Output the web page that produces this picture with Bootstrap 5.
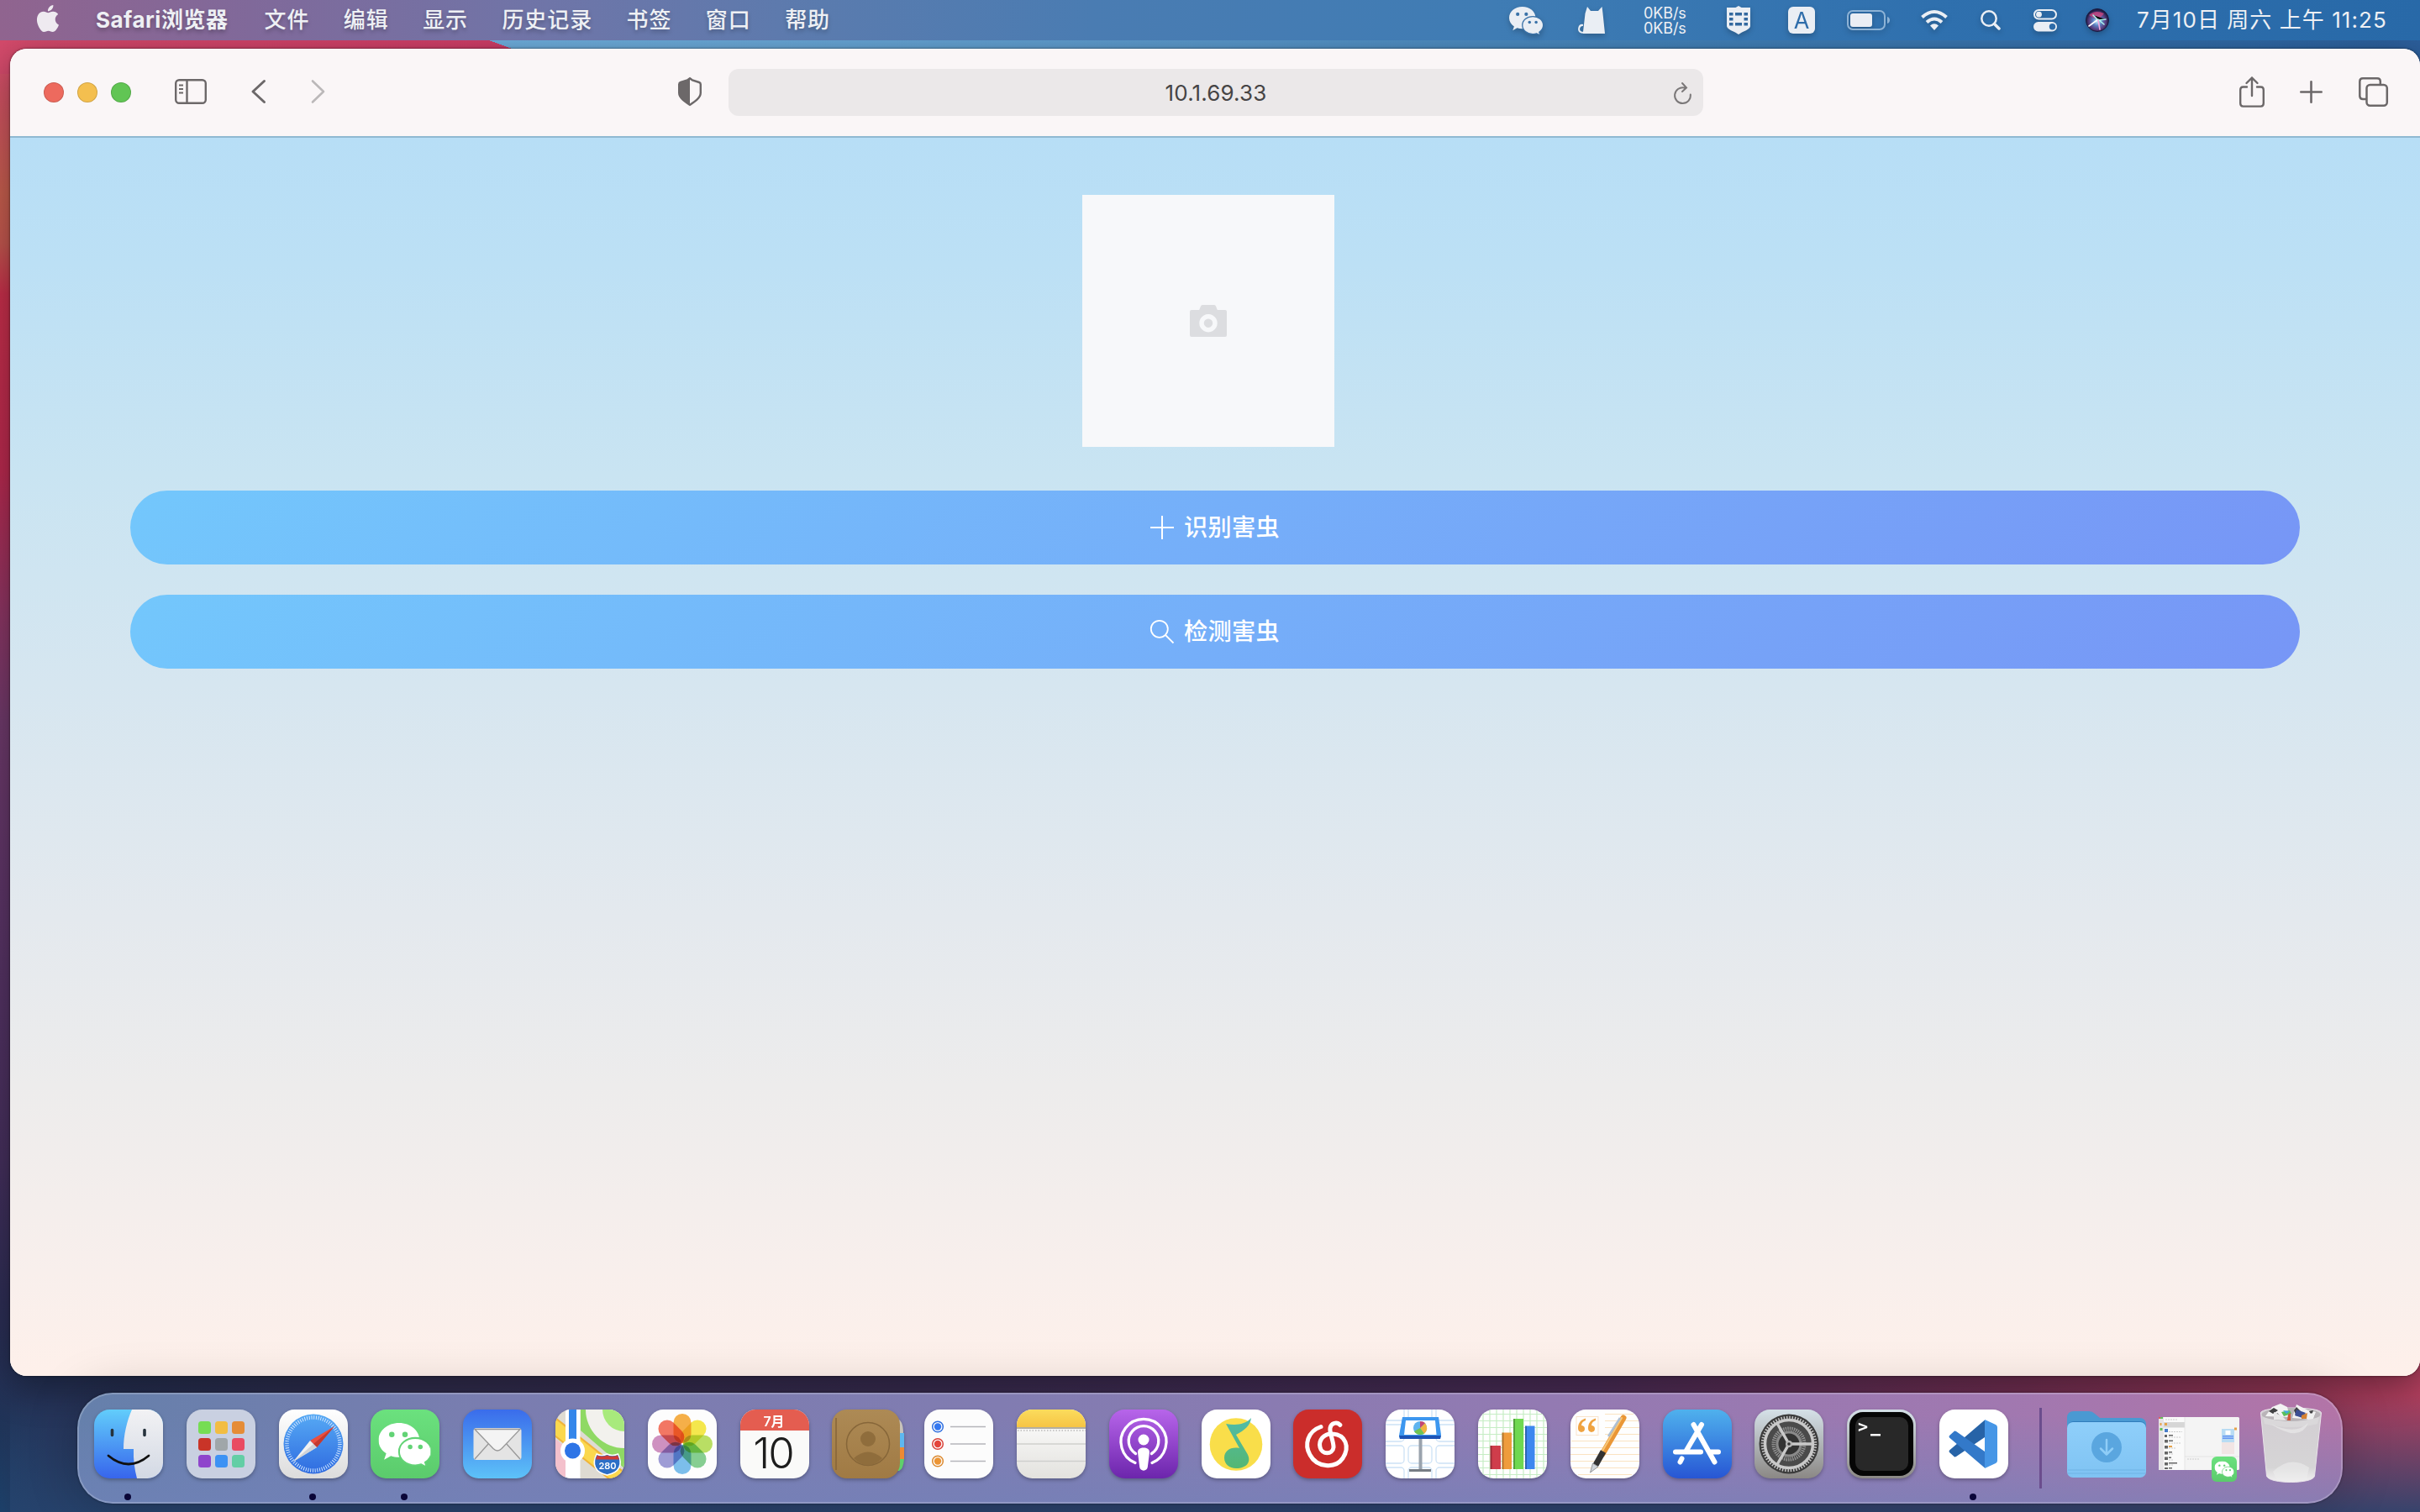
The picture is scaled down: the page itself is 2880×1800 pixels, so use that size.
<!DOCTYPE html>
<html lang="zh-CN">
<head>
<meta charset="utf-8">
<title>10.1.69.33</title>
<link href="https://cdn.jsdelivr.net/npm/bootstrap@5.3.0/dist/css/bootstrap.min.css" rel="stylesheet">
<script src="https://cdn.jsdelivr.net/npm/bootstrap@5.3.0/dist/js/bootstrap.bundle.min.js"></script>
<style>
html,body{width:2880px;height:1800px;overflow:hidden}
body{font-family:Inter,"Noto Sans CJK SC",sans-serif;font-size:26px;line-height:1.2;
 background:
 linear-gradient(180deg,rgba(42,70,112,0),rgba(38,68,110,.88)) 12px 1660px/2868px 140px no-repeat,
 linear-gradient(90deg,rgba(31,53,88,0) 0,#263358 60px,#353155 500px,#3e3058 1100px,#52315f 1900px,#7c335a 2400px,#a33c5c 2760px,#b23f5e 2880px) 0 1600px/2880px 200px no-repeat,
 linear-gradient(to top right,#d03e68 49.5%,#6fafde 50.5%) 582px 48px/30px 11px no-repeat,
 linear-gradient(90deg,#d54b6c 0,#d03e68 582px,#6fafde 582px,#6aa9d9 930px,#5c9bce 1400px,#4383ba 2000px,#2f68a5 2700px,#2c5f9c 2880px) 0 48px/2880px 40px no-repeat,
 linear-gradient(180deg,#d84d6f 0,#d84d6f 60px,#c9604f 230px,#c55850 290px,#c9304c 350px,#bb2a50 560px,#8d3766 735px,#703b6d 860px,#5c3568 1090px,#46305e 1380px,#2e2e56 1550px,#1f3458 1700px,#1c4069 1800px)}
svg{display:block;flex:none;overflow:visible}
.menubar{height:48px;flex:none;position:relative;z-index:2;color:#eef0f4;background:linear-gradient(90deg,#90648f 0,#80699a 300px,#6f75a8 650px,#5a7bae 980px,#4a7cb2 1300px,#3f7cb4 1780px,#2f70ae 2300px,#2869a8 2880px);padding:0 38px 0 41px}
.apple-mark{margin-top:-4px}
.menu-words{margin-left:41px;gap:40.5px;letter-spacing:.9px;font-weight:500;text-shadow:0 3px 5px rgba(0,0,0,.25)}
.menu-words .app-name{width:160px;font-weight:700;letter-spacing:.5px}
.menu-status svg,.menu-status .ime-key{filter:drop-shadow(0 3px 3px rgba(0,0,0,.22))}
.net-rate{font-size:18px;line-height:18px;width:52px;margin:2px 47px 0 46px;letter-spacing:-.1px}
.ime-key{width:32px;height:32px;border-radius:6px;background:#eaeef4;color:#2f6daa;font-size:27px;line-height:33px;margin-left:45px}
.clock{width:299px;margin-left:33px;letter-spacing:1.05px}
.gap-33{margin-left:33px}.gap-34{margin-left:34px}.gap-37{margin-left:37px}.gap-38{margin-left:38px}.gap-39{margin-left:39px}.gap-42{margin-left:42px}.gap-43{margin-left:43px}.gap-52{margin-left:52px}.gap-53{margin-left:53px}.gap-420{margin-left:420px}
.bubble-bar{--b:#eaeef4;color:#3a72a8}
.bubble-app{--b:#fff;color:#62d375}
.blend{mix-blend-mode:multiply}
.browser{height:1580px;border-radius:20px;overflow:hidden;background:#faf6f7}
.browser-shade{margin:10px 0 0 12px;box-shadow:0 0 3px rgba(0,0,0,.6),0 12px 46px rgba(0,0,0,.42);border-radius:20px;flex:none}
.toolbar{height:106px;background:#faf6f7;border-bottom:2px solid #8fb9d2;padding:0 38px 2px 40px;color:#6c6869;flex:none}
.lights{gap:16px;padding-top:2px}
.light{width:24px;height:24px;border-radius:50%;border:1px solid rgba(0,0,0,.14)}
.light-r{background:#ed6a5e}.light-y{background:#f4bf4f}.light-g{background:#61c554}
.address{width:1160px;height:56px;margin:2px 0 0 32px;border-radius:12px;background:#ebe8e9;color:#464445;padding:2px 14px 0 35px;font-size:26px;letter-spacing:.15px}
.page-body{background:linear-gradient(180deg,#b7def6 0,#bce0f5 150px,#c9e4f2 400px,#d6e6f0 650px,#e4e9ee 930px,#edecec 1130px,#f8efec 1350px,#fef0ea 1475px);padding:68px 143px 0}
.photo-box{width:300px;height:300px;background:#f7f8fa;margin:0 16px 52px 0}
.pill{height:88px;border:0;border-radius:44px;width:2582px;background:linear-gradient(135deg,#73c7fc 0,#7796f6 100%);color:#fff;font-size:28.2px;letter-spacing:.3px;font-weight:500;gap:12px;margin-bottom:36px}
.pill:hover{color:#fff}
.dock{position:relative;height:132px;width:2696px;margin:20px 0 0 92px;flex:none;border-radius:42px;padding:0 25px 0 20px;
 background:linear-gradient(180deg,rgba(112,130,186,0) 20%,rgba(112,130,186,.62)),linear-gradient(90deg,#6580ab 0,#7a7db0 500px,#817cb1 1100px,#937ab2 1750px,#a178b0 2300px,#b374a7 2696px);
 box-shadow:inset 0 0 0 2px rgba(255,255,255,.2),0 0 3px rgba(0,0,0,.4),0 0 60px rgba(0,0,0,.22)}
.dock-apps{padding-top:20px}
.dock-app{width:109.8px;flex:none}
.dock-app svg{filter:drop-shadow(0 2px 2px rgba(0,0,0,.28))}
.running{width:8px;height:8px;border-radius:50%;background:#0a0638;margin:18px 0 0 36px}
.rule-v{width:3px;height:96px;background:#6b4d8d;margin:18px 0 0 9px}
.folder{margin:22px 0 0 30px}
.minimized{margin:29px 0 0 15px}
.trash{margin:12px 0 0 25px}
</style>
</head>
<body class="d-flex flex-column">
<svg width="0" height="0" class="position-absolute" aria-hidden="true">
 <defs>
  <symbol id="wx" viewBox="0 0 61 50">
   <path fill="var(--b)" d="M24 0C10.500 0 0 9 0 20c0 6.500 3.500 12 9 15.500L6.500 43l8-4.500c3 1 6 1.500 9.500 1.500 13.500 0 24-9 24-20S37.500 0 24 0z"/>
   <path fill="var(--b)" stroke="currentColor" stroke-width="2" d="M43 17.500c-10.500 0-19 7-19 16s8.500 16 19 16c2.600 0 5-.4 7-1.100l6.500 3.600-1.900-6c4.500-3 7.400-7.500 7.400-12.500 0-9-8.500-16-19-16z"/>
   <g fill="currentColor"><circle cx="15.500" cy="13.500" r="3.200"/><circle cx="31" cy="13.500" r="3.200"/><circle cx="37" cy="28" r="2.700"/><circle cx="49" cy="28" r="2.700"/></g>
  </symbol>
  <linearGradient id="g1" x2="0" y2="1"><stop stop-color="#62cdfb"/><stop offset="1" stop-color="#3765ec"/></linearGradient>
  <linearGradient id="g2" x2="0" y2="1"><stop stop-color="#f2f2f4"/><stop offset="1" stop-color="#d3d9e4"/></linearGradient>
  <linearGradient id="g3" x2="0" y2="1"><stop stop-color="#fff"/><stop offset="1" stop-color="#dcdcdc"/></linearGradient>
  <linearGradient id="g4" x2="0" y2="1"><stop stop-color="#56a9f4"/><stop offset="1" stop-color="#2f6be0"/></linearGradient>
  <linearGradient id="g5" x2="0" y2="1"><stop stop-color="#6be17e"/><stop offset="1" stop-color="#5bcb6c"/></linearGradient>
  <linearGradient id="g6" x2="0" y2="1"><stop stop-color="#3a6ceb"/><stop offset="1" stop-color="#5dc2f8"/></linearGradient>
  <linearGradient id="g7" x2="0" y2="1"><stop stop-color="#b765ea"/><stop offset="1" stop-color="#6c25ac"/></linearGradient>
  <linearGradient id="g8" x2="0" y2="1"><stop stop-color="#4fb1ed"/><stop offset="1" stop-color="#2756d4"/></linearGradient>
  <linearGradient id="g9" x2="0" y2="1"><stop stop-color="#d5e1e8"/><stop offset="1" stop-color="#8b8885"/></linearGradient>
  <linearGradient id="g10" x2="0" y2="1"><stop stop-color="#fbdc5d"/><stop offset="1" stop-color="#f6c444"/></linearGradient>
  <linearGradient id="g11" x2="0" y2="1"><stop stop-color="#fff"/><stop offset="1" stop-color="#e3e2de"/></linearGradient>
  <linearGradient id="g12" x2="0" y2="1"><stop stop-color="#ad8a55"/><stop offset="1" stop-color="#a07a44"/></linearGradient>
  <linearGradient id="g13" x2="0" y2="1"><stop stop-color="#8fcffa"/><stop offset="1" stop-color="#7fc3f3"/></linearGradient>
  <linearGradient id="g14" x2="0" y2="1"><stop stop-color="#4fbba9"/><stop offset="1" stop-color="#55b773"/></linearGradient>
  <linearGradient id="g15" x2="0" y2="1"><stop stop-color="#d2cdd2"/><stop offset=".8" stop-color="#d6d5d6"/><stop offset="1" stop-color="#f2f1f2"/></linearGradient>
  <radialGradient id="siri" cx=".5" cy=".55" r=".5"><stop stop-color="#c6f3ff"/><stop offset=".4" stop-color="#5b7fc0"/><stop offset=".75" stop-color="#593b7c"/><stop offset="1" stop-color="#1c1c44"/></radialGradient>
  <clipPath id="sq"><rect width="82" height="82" rx="18.500"/></clipPath>
 </defs>
</svg>

<nav class="menubar d-flex align-items-center justify-content-between text-nowrap">
 <div class="d-flex align-items-center">
  <svg class="apple-mark" width="32" height="32" viewBox="0 0 24 24"><path fill="#eeeaf0" d="M12.152 6.896c-.948 0-2.415-1.078-3.960-1.040-2.040.027-3.910 1.183-4.961 3.014-2.117 3.675-.546 9.103 1.519 12.090 1.013 1.454 2.208 3.090 3.792 3.039 1.520-.065 2.090-.987 3.935-.987 1.831 0 2.350.987 3.960.948 1.637-.026 2.676-1.480 3.676-2.948 1.156-1.688 1.636-3.325 1.662-3.415-.039-.013-3.182-1.221-3.220-4.857-.026-3.040 2.480-4.494 2.597-4.559-1.429-2.090-3.623-2.324-4.390-2.376-2-.156-3.675 1.090-4.610 1.090zM15.530 3.830c.843-1.012 1.400-2.427 1.245-3.830-1.207.052-2.662.805-3.532 1.818-.78.896-1.454 2.338-1.273 3.714 1.338.104 2.715-.688 3.559-1.701"/></svg>
  <div class="menu-words d-flex">
   <span class="app-name">Safari浏览器</span><span>文件</span><span>编辑</span><span>显示</span><span>历史记录</span><span>书签</span><span>窗口</span><span>帮助</span>
  </div>
 </div>
 <div class="menu-status d-flex align-items-center">
  <svg class="bubble-bar" width="40" height="33"><use href="#wx"/></svg>
  <svg class="gap-42" width="32" height="32" viewBox="0 0 32 32"><path fill="#eaeef4" d="M11 0l4 5h9l4.500-5 1 8L32 32H6V30L8.500 8z"/><path fill="none" stroke="#eaeef4" stroke-width="2" d="M6 22c-5-1-7 7-2 8.500l4 .5"/></svg>
  <div class="net-rate">0KB/s<br>0KB/s</div>
  <svg width="28" height="34" viewBox="0 0 28 34"><path fill="#eaeef4" d="M14 0l3.500 2H28v22c0 3-6 6-10 7.500L14 34l-4-2.500C6 30 0 27 0 24V2h10.500z"/><path fill="#33699f" d="M3 8h4.500v3.500H3zM10 8h8v3.500h-8zM20.500 8H25v3.500h-4.500zM3 14h4.500v3.500H3zM20.500 14H25v3.500h-4.500zM3 20h4.500v3.500H3zM10 20h8v3.500h-8zM20.500 20H25v3.500h-4.500z"/></svg>
  <div class="ime-key text-center">A</div>
  <svg class="gap-38" width="51" height="24" viewBox="0 0 51 24"><rect x="1" y="1" width="44" height="22" rx="6" fill="none" stroke="#8db3d6" stroke-width="2"/><rect x="4" y="4" width="26" height="16" rx="3" fill="#eaeef4"/><path fill="#8db3d6" d="M48 8c4 1 4 7 0 8z"/></svg>
  <svg class="gap-37" width="32" height="24" viewBox="0 0 32 24"><g fill="none" stroke="#eaeef4" stroke-width="4"><path d="M1.500 8.500Q16-4.500 30.500 8.500"/><path d="M7 14.500Q16 6.500 25 14.500"/></g><path fill="#eaeef4" d="M16 24l-5-5.500q5-4.500 10 0z"/></svg>
  <svg class="gap-39" width="24" height="24" viewBox="0 0 24 24" fill="none" stroke="#eaeef4" stroke-width="2.500"><circle cx="10" cy="10" r="8.700"/><path stroke-width="3.500" stroke-linecap="round" d="M16.500 16.500l5.500 5.500"/></svg>
  <svg class="gap-39" width="28" height="26" viewBox="0 0 28 26"><rect x="1" y="1" width="26" height="10.500" rx="5.250" fill="none" stroke="#eaeef4" stroke-width="2"/><circle cx="6.500" cy="6.200" r="3.400" fill="#eaeef4"/><rect y="15" width="28" height="11.500" rx="5.700" fill="#eaeef4"/><circle cx="22.500" cy="20.700" r="3.700" fill="#2d6ba8"/></svg>
  <svg class="gap-34" width="28" height="28" viewBox="0 0 28 28"><circle cx="14" cy="14" r="13.500" fill="url(#siri)" stroke="#1c1a40"/><path d="M4 8Q12 1 22 6L15 14z" fill="#d2477f" opacity=".75"/><g stroke-linecap="round" stroke-width="1.600"><path stroke="#fff" d="M4 21l11-8"/><path stroke="#aef5ee" d="M9 8l6 6 9-1M15 13l7 6"/><path stroke="#f3a8de" d="M15 14l2 11"/></g></svg>
  <div class="clock">7月10日 周六 上午 11:25</div>
 </div>
</nav>

<div class="browser-shade">
<main class="browser d-flex flex-column">
 <header class="toolbar d-flex align-items-center">
  <div class="lights d-flex"><span class="light light-r"></span><span class="light light-y"></span><span class="light light-g"></span></div>
  <svg class="gap-52" width="38" height="30" viewBox="0 0 38 30" fill="none" stroke="currentColor" stroke-width="2.400"><rect x="1.200" y="1.200" width="35.600" height="27.600" rx="4"/><path d="M14.500 1v28"/><path stroke-width="2" d="M5 7.500h5M5 12h5M5 16.500h5"/></svg>
  <svg class="gap-53" width="18" height="28" viewBox="0 0 18 28" fill="none" stroke="currentColor" stroke-width="3" stroke-linecap="round" stroke-linejoin="round"><path d="M15.500 1.500L2 14l13.500 12.500"/></svg>
  <svg class="gap-53" width="17" height="28" viewBox="0 0 17 28" fill="none" stroke="#bbb8b9" stroke-width="2.600" stroke-linecap="round" stroke-linejoin="round"><path d="M2 1.500L15 14 2 26.500"/></svg>
  <svg class="gap-420" width="28" height="34" viewBox="0 0 28 34"><path d="M14 1.200l3 2.300 8 2.500q1.800.6 1.800 2.500v10c0 6-7 10.500-12.800 14.300C8.200 29 1.200 24.500 1.200 18.500v-10Q1.200 6.600 3 6l8-2.500z" fill="none" stroke="currentColor" stroke-width="2.400"/><path fill="currentColor" d="M14 1v32C8 29 1 24.500 1 18.500V7l10-3.500z"/></svg>
  <div class="address d-flex align-items-center justify-content-between"><span></span><span>10.1.69.33</span>
   <svg width="21" height="26" viewBox="0 0 21 26" fill="none" stroke="#7b7879" stroke-width="2" stroke-linecap="round"><path d="M19.800 14.500A9.400 9.400 0 1 1 12.500 6.500M10 1l5 5.500L10 11"/></svg>
  </div>
  <svg width="30" height="37" viewBox="0 0 30 37" class="ms-auto" fill="none" stroke="currentColor" stroke-width="2.400" stroke-linecap="round" stroke-linejoin="round"><path d="M9 12.500H4.500Q1.200 12.500 1.200 16v16q0 3.600 3.300 3.600h21q3.300 0 3.300-3.600V16q0-3.500-3.300-3.500H21M15 23V1.500M8.500 8L15 1.500 21.500 8"/></svg>
  <svg class="gap-42" width="27" height="27" viewBox="0 0 27 27" stroke="currentColor" stroke-width="2.600" stroke-linecap="round"><path d="M13.500 1.300v24.400M1.300 13.500h24.400"/></svg>
  <svg class="gap-43" width="35" height="35" viewBox="0 0 35 35" fill="none" stroke="currentColor" stroke-width="2.500"><rect x="9.500" y="9" width="24.300" height="24.700" rx="4"/><path d="M9.500 26H5q-3.700 0-3.700-3.700V5Q1.300 1.300 5 1.300h17q3.800 0 3.800 3.700v4"/></svg>
 </header>
 <section class="page-body flex-grow-1 d-flex flex-column align-items-center">
  <div class="photo-box d-flex align-items-center justify-content-center flex-shrink-0">
   <svg width="44" height="38" viewBox="0 0 44 38"><path fill="#dcdde0" fill-rule="evenodd" d="M15 0h14q1.500 0 2 1.500l1.800 4.500H42q2 0 2 2v28q0 2-2 2H2q-2 0-2-2V8q0-2 2-2h9.200L13 1.500Q13.500 0 15 0zM22 11a10.700 10.700 0 1 0 .01 0zM22 16.500a5.200 5.200 0 1 1-.01 0z"/></svg>
  </div>
  <button class="pill btn d-flex align-items-center justify-content-center">
   <svg width="28" height="28" viewBox="0 0 28 28" stroke="#fff" stroke-width="2"><path d="M14 0v28M0 14h28"/></svg><span>识别害虫</span></button>
  <button class="pill btn d-flex align-items-center justify-content-center">
   <svg width="28" height="28" viewBox="0 0 28 28" fill="none" stroke="#fff" stroke-width="1.800"><circle cx="10.800" cy="10.800" r="10"/><path d="M18 18l9.500 9.500"/></svg><span>检测害虫</span></button>
 </section>
</main>
</div>

<footer class="dock d-flex align-items-start">
 <div class="dock-apps d-flex">
 <div class="dock-app"><svg width="82" height="82"><g clip-path="url(#sq)"><rect width="82" height="82" fill="url(#g1)"/><path fill="url(#g2)" d="M45 0C39 14 35 30 35 47h12c-.5 12 1 24 4 35h31V0z"/></g><path d="M21.500 24.500v6M60 24.500v6" stroke="#26323c" stroke-width="3.600" stroke-linecap="round"/><path d="M17 55Q41 75 65 55" fill="none" stroke="#111" stroke-width="2.800" stroke-linecap="round"/></svg><div class="running"></div></div>
 <div class="dock-app"><svg width="82" height="82"><rect width="82" height="82" rx="18.500" fill="#c9d0e1"/><g><rect x="14" y="14" width="15" height="15" rx="3.500" fill="#76dd54"/><rect x="34" y="14" width="15" height="15" rx="3.500" fill="#f2bd42"/><rect x="54" y="14" width="15" height="15" rx="3.500" fill="#e58c37"/><rect x="14" y="34" width="15" height="15" rx="3.500" fill="#c93428"/><rect x="34" y="34" width="15" height="15" rx="3.500" fill="#a0a6a9"/><rect x="54" y="34" width="15" height="15" rx="3.500" fill="#e94b62"/><rect x="14" y="54" width="15" height="15" rx="3.500" fill="#8f45cc"/><rect x="34" y="54" width="15" height="15" rx="3.500" fill="#3d92f4"/><rect x="54" y="54" width="15" height="15" rx="3.500" fill="#63cea5"/></g></svg></div>
 <div class="dock-app"><svg width="82" height="82"><rect width="82" height="82" rx="18.500" fill="url(#g3)"/><circle cx="41" cy="41" r="35.500" fill="url(#g4)"/><circle cx="41" cy="41" r="31.500" fill="none" stroke="#cfe6ff" stroke-width="4.500" stroke-dasharray="1 1.749"/><path fill="#eb4e3f" d="M66 20L45 45l-8-8z"/><path fill="#f1f1f1" d="M17 62L37 37l8 8z"/><path fill="#c43a30" d="M66 20L45 45l-4-4z"/><path fill="#cfd3d8" d="M17 62L41 41l4 4z"/></svg><div class="running"></div></div>
 <div class="dock-app"><svg width="82" height="82"><rect width="82" height="82" rx="18.500" fill="url(#g5)"/><use class="bubble-app" href="#wx" x="9.500" y="16" width="62" height="51"/></svg><div class="running"></div></div>
 <div class="dock-app"><svg width="82" height="82"><rect width="82" height="82" rx="18.500" fill="url(#g6)"/><rect x="12.500" y="22" width="57" height="38" rx="3.500" fill="#e4e4e4"/><path d="M14 59l17-19M68 59L51 40" stroke="#999" stroke-width="1.300"/><path d="M14 23.500l22 23q5 5 10 0l22-23z" fill="#f4f4f4" stroke="#999" stroke-width="1.300"/></svg></div>
 <div class="dock-app"><svg width="82" height="82"><g clip-path="url(#sq)"><rect width="82" height="82" fill="#dedbd2"/><path fill="#8fd964" d="M30 0h52v70L30 25z"/><circle cx="82" cy="0" r="46" fill="#f2f1ed"/><circle cx="82" cy="0" r="26" fill="#a8ea7c"/><path fill="#f4c1cc" d="M0 35l12 10v37H0z"/><path stroke="#f0b43a" stroke-width="19" d="M-5 17L82 86"/><path stroke="#fbd84e" stroke-width="15" d="M-5 17L82 86"/><path fill="#fff" d="M12 0h17.500v82H12z"/><path fill="#3486ea" d="M16 0h9v42h-9z"/><circle cx="20.500" cy="49" r="14.500" fill="#fff"/><circle cx="20.500" cy="49" r="9.500" fill="#2d74e6"/></g><path fill="#2c6fc7" stroke="#fff" stroke-width="1.500" d="M49 53q6 3 12.500 0 6 3 13 0c6 12 2 22-13 25C47 75 43 65 49 53z"/><path fill="#cf3a37" d="M49.500 54.500q6 2.500 12 0 6 2.500 12.500 0l2 5H48z"/><text x="62" y="70.500" font-size="11" font-weight="600" fill="#fff" text-anchor="middle">280</text></svg></div>
 <div class="dock-app"><svg width="82" height="82"><rect width="82" height="82" rx="18.500" fill="#fdfdfd"/><g opacity=".92"><rect x="30.500" y="5" width="21" height="35" rx="10.500" fill="#f5a93a"/><rect class="blend" x="30.500" y="5" width="21" height="35" rx="10.500" fill="#f4e63f" transform="rotate(45 41 41)"/><rect class="blend" x="30.500" y="5" width="21" height="35" rx="10.500" fill="#b4dc58" transform="rotate(90 41 41)"/><rect class="blend" x="30.500" y="5" width="21" height="35" rx="10.500" fill="#7ccb8a" transform="rotate(135 41 41)"/><rect class="blend" x="30.500" y="5" width="21" height="35" rx="10.500" fill="#72b9ea" transform="rotate(180 41 41)"/><rect class="blend" x="30.500" y="5" width="21" height="35" rx="10.500" fill="#9794d2" transform="rotate(225 41 41)"/><rect class="blend" x="30.500" y="5" width="21" height="35" rx="10.500" fill="#cb88bb" transform="rotate(270 41 41)"/><rect class="blend" x="30.500" y="5" width="21" height="35" rx="10.500" fill="#f26c58" transform="rotate(315 41 41)"/></g></svg></div>
 <div class="dock-app"><svg width="82" height="82"><g clip-path="url(#sq)"><rect width="82" height="82" fill="#fafaf9"/><rect width="82" height="25" fill="#e45d50"/></g><text x="40" y="20" font-size="16" font-weight="600" fill="#fff" text-anchor="middle">7月</text><text x="39" y="69.500" font-size="51" font-weight="300" letter-spacing="-2" fill="#1d1d1d" text-anchor="middle">10</text></svg></div>
 <div class="dock-app"><svg width="82" height="82"><path fill="#c8c3ba" d="M76 10q9 2 9 18h-9z"/><path fill="#5db7f0" d="M76 28h10v17H76z"/><path fill="#ee8a32" d="M76 45h10v14H76z"/><path fill="#5fd06b" d="M76 59h10q-1 12-6 14h-4z"/><rect width="81" height="82" rx="18" fill="url(#g12)"/><path d="M5 10v62" stroke="#866439" stroke-width="1.500"/><circle cx="43" cy="41" r="25.500" fill="none" stroke="#866639" stroke-width="1.500"/><circle cx="43" cy="35" r="9" fill="#8f6d3c"/><path d="M26 58q17-15 34 0-17 17-34 0z" fill="#8f6d3c"/></svg></div>
 <div class="dock-app"><svg width="82" height="82"><rect width="82" height="82" rx="18.500" fill="#fcfcfc"/><g fill="none" stroke-width="1.500"><circle cx="16" cy="20.500" r="6.300" stroke="#2f6fe0"/><circle cx="16" cy="41" r="6.300" stroke="#d9433a"/><circle cx="16" cy="61.500" r="6.300" stroke="#dc8a30"/></g><circle cx="16" cy="20.500" r="4.200" fill="#3478f0"/><circle cx="16" cy="41" r="4.200" fill="#e4463c"/><circle cx="16" cy="61.500" r="4.200" fill="#ec9535"/><path stroke="#b5b5ba" stroke-width="1.500" d="M31 20.500h42M31 41h42M31 61.500h42"/></svg></div>
 <div class="dock-app"><svg width="82" height="82"><g clip-path="url(#sq)"><rect width="82" height="82" fill="url(#g11)"/><rect width="82" height="21" fill="url(#g10)"/></g><path stroke="#9c9684" stroke-width="1.300" d="M0 22h82"/><path stroke="#bbb" stroke-width="1.500" stroke-dasharray="1.500 2" d="M1 25h81"/><path stroke="#cfcfcd" stroke-width="1.300" d="M0 41h82M0 61.500h82"/></svg></div>
 <div class="dock-app"><svg width="82" height="82"><rect width="82" height="82" rx="18.500" fill="url(#g7)"/><g fill="none" stroke="#fff" stroke-width="3.300" stroke-linecap="round"><path d="M31 63.500A27 27 0 1 1 51 63.500"/><path d="M31.500 52.500A17.800 17.800 0 1 1 50.500 52.500"/></g><circle cx="41" cy="36" r="6.500" fill="#fff"/><path fill="#fff" d="M41 45.500c5 0 7.500 2 6.800 7l-2 16c-.6 5.500-9 5.500-9.600 0l-2-16c-.7-5 1.800-7 6.800-7z"/></svg></div>
 <div class="dock-app"><svg width="82" height="82"><rect width="82" height="82" rx="18.500" fill="#fff"/><circle cx="41" cy="41.500" r="31.300" fill="#f9de4a"/><path fill="url(#g14)" d="M59 10c-1 9-8 15-18 20l13 22c6 10 0 18-13 18-8 0-14-5-14-12.500C27 49 35 44 45 46L29 17c12 2 23 1 30-7z"/></svg></div>
 <div class="dock-app"><svg width="82" height="82"><rect width="82" height="82" rx="18.500" fill="#cb2d2b"/><path fill="none" stroke="#fff" stroke-width="5" stroke-linecap="round" d="M33 20.500C17 26 13 42 20 54c8 15 30 17 39 4 9-14 3-28-12-29-11-1-17 8-15 16 2 9 15 9 16 0 0-8-5-17-4-23 1-6 8-8 12-3.500"/></svg></div>
 <div class="dock-app"><svg width="82" height="82"><g clip-path="url(#sq)"><rect width="82" height="82" fill="#fff"/><g fill="none" stroke="#cde2f6" stroke-width="1.300"><rect x="-8" y="18" width="30" height="20" rx="4"/><rect x="-8" y="43" width="30" height="21" rx="4"/><rect x="27" y="43" width="28" height="21" rx="4"/><rect x="60" y="18" width="30" height="20" rx="4"/><rect x="60" y="43" width="30" height="21" rx="4"/><rect x="-8" y="69" width="30" height="20" rx="4"/><rect x="27" y="69" width="28" height="20" rx="4"/><rect x="60" y="69" width="30" height="20" rx="4"/><path d="M22 0v13H0M27 0v10M55 0v10M60 0v13h22"/></g></g><path fill="#9aa3ad" d="M39.500 34h4v39h-4z"/><path fill="#777d84" d="M28 71h26v3H28z"/><path fill="#3d97ef" d="M20 9h43l3 21-1 5H17l-1-4z"/><path fill="#1e54b6" d="M16 31h50l-1 4H17z"/><path fill="#fff" d="M24 13h35l1.500 17H22z"/><circle cx="41" cy="22" r="8" fill="#5fb4ef"/><path fill="#f1b240" d="M41 22l6-6q5 7-1 13z"/><path fill="#c64572" d="M41 22v-8q4 0 6 2z"/><path fill="#70c453" d="M41 22l5 7q-8 3-12-3z"/></svg></div>
 <div class="dock-app"><svg width="82" height="82"><g clip-path="url(#sq)"><rect width="82" height="82" fill="#fff"/><path stroke="#c6edc4" stroke-width="1.200" d="M0 5.500h82M0 13.500h82M0 21.500h82M0 29.500h82M0 37.500h82M0 45.500h82M0 53.500h82M0 61.500h82M0 69.500h82M0 77.500h82M6 0v82M14 0v82M22 0v82M30 0v82M38 0v82M46 0v82M54 0v82M62 0v82M70 0v82M78 0v82"/></g><path fill="#cf3d4b" d="M14.500 43H27v28H14.500z"/><path fill="#ef9c3c" d="M28.500 27.500H40V71H28.500z"/><path fill="#6fd850" d="M42 11h12v60H42z"/><path fill="#3d87ef" d="M56 19.500h11.500V71H56z"/><path fill="#000" opacity=".25" d="M14.500 43h2v28h-2zM28.500 27.500h2V71h-2zM42 11h2v60h-2zM56 19.500h2V71h-2z"/></svg></div>
 <div class="dock-app"><svg width="82" height="82"><rect width="82" height="82" rx="18.500" fill="#fefefe"/><path stroke="#fae3c1" stroke-width="1.200" d="M41 5.500h34M41 13.500h40M41 21.500h41M41 29.500h41M1 37.500h81M0 45.500h82M0 53.500h82M0 61.500h82M2 69.500h78M9 77.500h64"/><rect x="7" y="8.500" width="26" height="22" fill="none" stroke="#f9e3cb"/><path fill="#efa341" d="M18 10.500c-7 2-9 7-9 12 0 6 8 5.500 8 .5 0-3-2-4-4-4 0-3 2-5 5-6zM30 10.500c-7 2-9 7-9 12 0 6 8 5.500 8 .5 0-3-2-4-4-4 0-3 2-5 5-6z"/><path stroke="#ea9737" stroke-width="7" stroke-linecap="round" d="M63 10L38 53"/><path stroke="#f8c879" stroke-width="2" stroke-linecap="round" d="M61 10L37 51"/><path stroke="#aebfd2" stroke-width="2.500" d="M59 10L45 32"/><path stroke="#333" stroke-width="7" d="M39 50L30 66"/><path fill="#cfd4da" stroke="#777" stroke-width=".7" d="M26.500 64l6.500 4-9.500 7z"/></svg></div>
 <div class="dock-app"><svg width="82" height="82"><rect width="82" height="82" rx="18.500" fill="url(#g8)"/><g stroke="#fff" stroke-width="6" stroke-linecap="round"><path d="M46 18L27.500 49.500M36.500 18l25 44.500M15 50.500h30M56.500 50.500H66M22.500 58.500l-2 4"/></g></svg></div>
 <div class="dock-app"><svg width="82" height="82"><rect width="82" height="82" rx="18.500" fill="url(#g9)"/><circle cx="41" cy="41" r="35.500" fill="#3b3b3b"/><circle cx="41" cy="41" r="31.500" fill="none" stroke="#c5c5c5" stroke-width="3.500" stroke-dasharray="1.500 1.799"/><circle cx="41" cy="41" r="28.500" fill="#4a4a4a" stroke="#c9c9c9" stroke-width="3.500"/><circle cx="41" cy="41" r="18" fill="#333" stroke="#909090" stroke-width="5" stroke-dasharray="1.500 1"/><circle cx="41" cy="41" r="14" fill="none" stroke="#8a8a8a" stroke-width="3"/><path stroke="#c9c9c9" stroke-width="3.500" d="M41 41h28M41 41L27 16.500M41 41L27 65.500"/><circle cx="41" cy="41" r="4" fill="#b5b5b5"/><circle cx="41" cy="41" r="1.800" fill="#333"/></svg></div>
 <div class="dock-app"><svg width="82" height="82"><rect width="82" height="82" rx="18.500" fill="url(#g9)"/><rect x="3" y="3" width="76" height="76" rx="16" fill="#060606"/><rect x="10" y="9" width="63" height="64" rx="10" fill="#282828"/><text x="13" y="27" font-family="DejaVu Sans Mono" font-weight="700" font-size="20" fill="#fff">&gt;</text><path fill="#fff" d="M28 29h12v2.500H28z"/></svg></div>
 <div class="dock-app"><svg width="82" height="82"><rect width="82" height="82" rx="18.500" fill="#fff"/><path fill="#2763a7" d="M12 48.500L54 12.500V33L20 56q-2 1-3-.5l-5-4.500q-1-1.500 0-2.500z"/><path fill="#3379c9" d="M12 33.500L54 69.500V50L20 26q-2-1-3 .5l-5 4.500q-1 1.500 0 2.500z"/><path fill="#4696e6" d="M54 12l13 6q2 1 2 3v40q0 2-2 3l-13 6z"/></svg><div class="running"></div></div>
 </div>
 <div class="rule-v"></div>
 <svg class="folder" width="94" height="79" viewBox="0 0 94 79"><path fill="#4a99d2" d="M0 34V8q0-8 8-8h18q4 0 7 3l6 5h47q8 0 8 8v16z"/><path fill="#2f7cbc" d="M1 20q0-8 7-8h78q8 0 8 8v6H1z"/><rect y="13" width="94" height="66" rx="7" fill="url(#g13)"/><path stroke="#6fb3e4" d="M1 70h92M1 74h92"/><circle cx="47" cy="43" r="18" fill="#5aa6df"/><path fill="none" stroke="#8fcdf7" stroke-width="2.500" stroke-linecap="round" stroke-linejoin="round" d="M47 34v17M40 44.500l7 7 7-7"/></svg>
 <svg class="minimized" width="96" height="78" viewBox="0 0 96 78"><rect width="96" height="63" rx="1.500" fill="#f4f4f4"/><path fill="#e6e4e6" d="M0 0h6v63H0z"/><path fill="#fafafa" d="M6 0h25v63H6z"/><path fill="#d6d6d6" d="M6 6h25v6.500H6z"/><path stroke="#ddd" stroke-width=".7" d="M31 0v63M31 47h65"/><path fill="#e0605c" d="M0 0h2v2H0z"/><path fill="#64c058" d="M2 0h3v2H2zM1.500 13h3v3h-3z"/><path fill="#e5a24a" d="M1.500 7h2v3h-2zM7 7h3v3H7zM12 34h4v2h-4zM90 12.500h3v3h-3z"/><path fill="#467bc8" d="M7 14h4v4H7z"/><path fill="#666" d="M7 21h3v3H7zM7 27h4v3.500H7zM7 34h4v3.500H7zM7 41h4v3.500H7zM7 47.500h4V51H7zM7 54h4v3.500H7zM7 60h4v2H7zM12 21h5v1.500h-5zM12 27.500h5V29h-5zM12 41h4v1.500h-4zM12 47.500h3V49h-3zM12 54h10v1.500H12zM12 60h4v1.500h-4z"/><path stroke="#ccc" stroke-dasharray="2 1" d="M12 17.500h16M12 24h14M12 31h15M12 37h9M12 44h5M12 51h6M12 57h6M8 3h14M34 50h14"/><rect x="75" y="14" width="15" height="30" fill="#b9dcf3"/><rect x="75" y="30" width="15" height="14" fill="#f1e5e4"/><path fill="#fff" d="M79.500 16h6v5h-6z"/><path fill="#6796f3" d="M76 22h13v1.600H76zM76 24.500h13V26H76z"/><rect x="63" y="47" width="30" height="30" rx="6" fill="url(#g5)"/><use class="bubble-app" href="#wx" x="66.500" y="52.500" width="23" height="19"/></svg>
 <svg class="trash" width="73" height="96" viewBox="0 0 73 96"><path fill="url(#g15)" stroke="#e9e4ea" d="M.5 12c0-8 72-8 72 0l-8 75c-1 10-55 10-57 0z"/><ellipse cx="36.500" cy="14" rx="35" ry="8" fill="#b9b4b8"/><path fill="#f3f3f3" d="M6 16L14 5l10-4 8 4 3 12zM38 18L43 2l14 7 9 2-4 9z"/><path fill="#414143" d="M10 10l6-4 5 3-6 4zM16 20l4-8 8 8zM40 9l3-4 5 5-5 6zM58 10l5-1-2 6z"/><path fill="#59bf5b" d="M25 11l10-2 2 4-9 3z"/><path fill="#42a9df" d="M27 9l8 1-4 3z"/><path fill="#d1583b" d="M33 14l3-2v9h-4z"/><path fill="#e8e8e8" d="M16 11l10 5 5 5-15-1z"/><path fill="#3d4f94" d="M43 8l11 4-4 6-9-3z"/><path fill="#d58233" d="M49 15l7-3-1 7h-6z"/><path fill="#f0f0f0" d="M57 13l8-1-2 7-7 2z"/><path fill="#dad8da" d="M3 17q33 10 67 0l-2 8q-31 8-63 0z"/><path fill="#ececec" opacity=".6" d="M12 25q30 14 45-1-10 24-45 1zM15 82q20-20 43-5l-3 14H19z"/></svg>
</footer>
</body>
</html>
